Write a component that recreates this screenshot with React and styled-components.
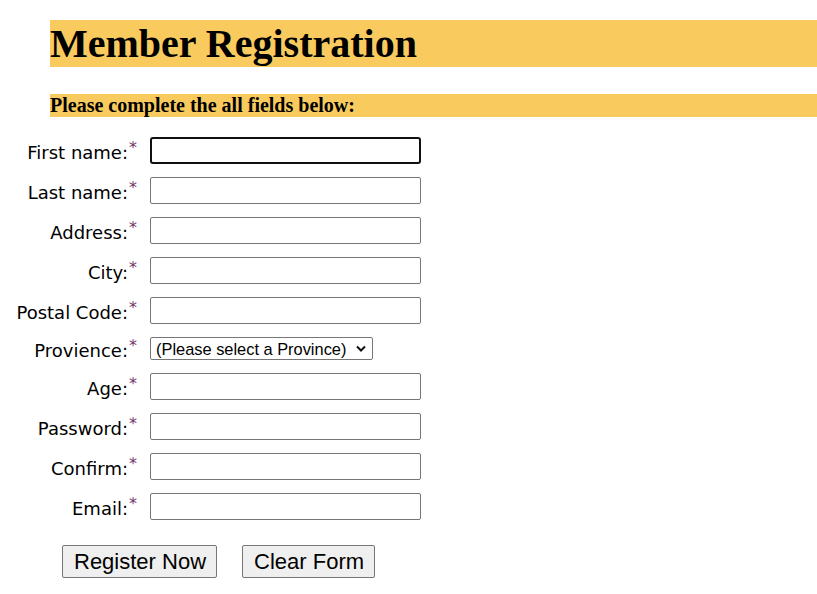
import React from "react";
import styled, { createGlobalStyle } from "styled-components";

const GlobalStyle = createGlobalStyle`
  body {
    margin: 0;
    background: #fff;
    color: #000;
  }
`;

const Page = styled.div`
  padding-top: 20px;
`;

const Title = styled.h1`
  margin: 0 0 27px 50px;
  background: #f9cb5f;
  font-family: "Liberation Serif", "Times New Roman", serif;
  font-size: 40px;
  font-weight: bold;
  line-height: 47px;
  height: 47px;
`;

const SubTitle = styled.h3`
  margin: 0 0 20px 50px;
  background: #f9cb5f;
  font-family: "Liberation Serif", "Times New Roman", serif;
  font-size: 20px;
  font-weight: bold;
  line-height: 23px;
  height: 23px;
`;

const Form = styled.form`
  display: flex;
  flex-direction: column;
  gap: 13px;
`;

const Row = styled.div`
  display: grid;
  grid-template-columns: 137px 271px;
  column-gap: 13px;
  align-items: center;
`;

const Label = styled.label`
  text-align: right;
  font-family: "DejaVu Sans", Verdana, sans-serif;
  font-size: 18px;
  line-height: 19px;
  padding-top: 4px;
  white-space: nowrap;
`;

const Required = styled.sup`
  color: #74366e;
  font-size: 16px;
  margin-left: 1px;
  vertical-align: 6px;
  line-height: 0;
`;

const TextInput = styled.input`
  box-sizing: border-box;
  width: 271px;
  height: 27px;
  margin: 0;
  padding: 2px 4px;
  border: ${(p) => (p.$focused ? "2px solid #101010" : "1px solid #767676")};
  border-radius: ${(p) => (p.$focused ? "3px" : "2px")};
  font-family: "Liberation Sans", Arial, sans-serif;
  font-size: 16px;
  background: #fff;
  outline: none;
`;

const SelectWrap = styled.div`
  position: relative;
  justify-self: start;
  width: 223px;
  height: 23px;
`;

const Select = styled.select`
  box-sizing: border-box;
  appearance: none;
  width: 223px;
  height: 23px;
  margin: 0;
  padding: 0 0 0 5px;
  border: 1px solid #767676;
  border-radius: 2px;
  font-family: "Liberation Sans", Arial, sans-serif;
  font-size: 16.4px;
  background: #fff;
  color: #000;
`;

const Chevron = styled.svg`
  position: absolute;
  right: 7px;
  top: 8px;
  width: 10px;
  height: 7px;
  pointer-events: none;
`;

const Buttons = styled.div`
  display: flex;
  gap: 25px;
  margin-top: 12px;
  padding-left: 62px;
`;

const Button = styled.button`
  box-sizing: border-box;
  height: 33px;
  padding: 0 10px 0 11px;
  border: 1px solid #767676;
  border-radius: 2px;
  background: #efefef;
  color: #000;
  font-family: "Liberation Sans", Arial, sans-serif;
  font-size: 22px;
`;

const fields = [
  { label: "First name:", type: "text", focused: true },
  { label: "Last name:", type: "text" },
  { label: "Address:", type: "text" },
  { label: "City:", type: "text" },
  { label: "Postal Code:", type: "text" },
  { label: "Provience:", type: "select" },
  { label: "Age:", type: "text" },
  { label: "Password:", type: "password" },
  { label: "Confirm:", type: "password" },
  { label: "Email:", type: "text" },
];

export default function App() {
  return (
    <Page>
      <GlobalStyle />
      <Title>Member Registration</Title>
      <SubTitle>Please complete the all fields below:</SubTitle>
      <Form onSubmit={(e) => e.preventDefault()}>
        {fields.map((f) => (
          <Row key={f.label}>
            <Label>
              {f.label}
              <Required>*</Required>
            </Label>
            {f.type === "select" ? (
              <SelectWrap>
                <Select defaultValue="">
                  <option value="">(Please select a Province)</option>
                </Select>
                <Chevron viewBox="0 0 10 7">
                  <path d="M1 1.5 L5 5.5 L9 1.5" fill="none" stroke="#111" strokeWidth="2" />
                </Chevron>
              </SelectWrap>
            ) : (
              <TextInput type={f.type} $focused={f.focused} />
            )}
          </Row>
        ))}
        <Buttons>
          <Button type="submit">Register Now</Button>
          <Button type="reset">Clear Form</Button>
        </Buttons>
      </Form>
    </Page>
  );
}
